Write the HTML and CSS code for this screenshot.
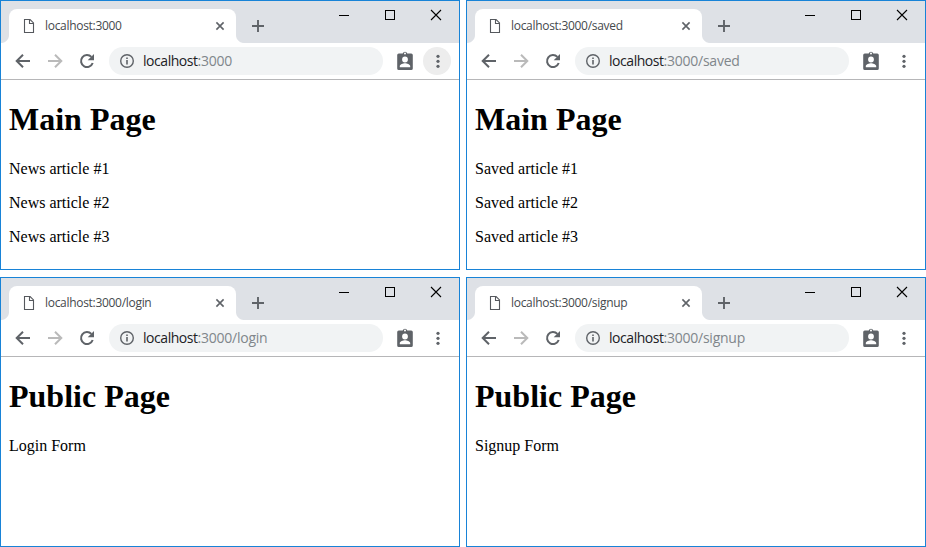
FILE: index.html
```
<!DOCTYPE html>
<html lang="en">
<head>
<meta charset="utf-8">
<title>Pages</title>
<link rel="stylesheet" href="styles.css">
</head>
<body>
<main class="windows" id="windows"></main>

<template id="window-template">
  <section class="window">
    <header class="tabstrip">
      <div class="tab">
        <svg class="tab-icon" width="12" height="16" viewBox="0 0 12 16"><path d="M1.5 1.5h5.6l3.4 3.4v9.6h-9zM6.5 1.5v4h4" fill="none" stroke="#55585d" stroke-width="1.1"/></svg>
        <span class="tab-title"></span>
        <svg class="tab-close" width="10" height="10" viewBox="0 0 10 10"><path d="M1.4 1.4l7.2 7.2M8.6 1.4L1.4 8.6" stroke="#5f6368" stroke-width="1.6"/></svg>
      </div>
      <svg class="new-tab" width="12" height="12" viewBox="0 0 12 12"><path d="M6 0v12M0 6h12" stroke="#5f6368" stroke-width="1.9"/></svg>
      <div class="controls">
        <svg width="12" height="12" viewBox="0 0 12 12" shape-rendering="crispEdges"><path d="M1 6.5h10" stroke="#000"/></svg>
        <svg width="12" height="12" viewBox="0 0 12 12" shape-rendering="crispEdges"><path d="M1.5 1.5h9v9h-9z" fill="none" stroke="#000"/></svg>
        <svg width="12" height="12" viewBox="0 0 12 12"><path d="M1 1l10 10M11 1L1 11" stroke="#000" stroke-width="1.1"/></svg>
      </div>
    </header>
    <nav class="toolbar">
      <span class="button"><svg width="16" height="16" viewBox="0 0 16 16"><path d="M15 8H2.5M8 1.7L1.7 8 8 14.3" fill="none" stroke="#5f6368" stroke-width="2"/></svg></span>
      <span class="button"><svg width="16" height="16" viewBox="0 0 16 16"><path d="M1 8h12.5M8 1.7L14.3 8 8 14.3" fill="none" stroke="#bababa" stroke-width="2"/></svg></span>
      <span class="button"><svg width="16" height="16" viewBox="0 0 16 16"><path d="M13.7 10A6 6 0 1 1 12.4 3.9" fill="none" stroke="#5f6368" stroke-width="2"/><path d="M15 1v6.3H8.7z" fill="#5f6368"/></svg></span>
      <div class="address">
        <svg width="14" height="14" viewBox="0 0 14 14"><circle cx="7" cy="7" r="6.3" fill="none" stroke="#5f6368" stroke-width="1.4"/><path d="M7 3.4v1.5M7 6v4.6" stroke="#5f6368" stroke-width="1.6"/></svg>
        <span class="url"><span class="host">localhost</span><span class="rest"></span></span>
      </div>
      <span class="button"><svg width="16" height="20" viewBox="0 0 16 20"><path fill-rule="evenodd" fill="#5f6368" d="M1.8 2.4h3.9a2.4 2.4 0 0 1 4.6 0h3.9a1.6 1.6 0 0 1 1.6 1.6v13.4a1.6 1.6 0 0 1-1.6 1.6H1.8a1.6 1.6 0 0 1-1.6-1.6V4a1.6 1.6 0 0 1 1.6-1.6zM8 1.6a1 1 0 1 0 0 2 1 1 0 0 0 0-2zM8 5.6a2.9 2.9 0 1 0 0 5.8 2.9 2.9 0 0 0 0-5.8zM2.8 16.3h10.4v-1.2c0-1.9-3.4-2.9-5.2-2.9s-5.2 1-5.2 2.9z"/></svg></span>
      <span class="button menu"><svg width="5" height="14" viewBox="0 0 5 14"><g fill="#5f6368"><circle cx="3" cy="2.3" r="1.6"/><circle cx="3" cy="7.3" r="1.6"/><circle cx="3" cy="12.3" r="1.6"/></g></svg></span>
    </nav>
    <article class="page"><h1></h1></article>
  </section>
</template>
<script src="windows.js"></script>
</body>
</html>
```
FILE: styles.css
```
body {
  margin: 0;
  background: #fff;
}

.windows {
  display: grid;
  grid-template-columns: 460px 460px;
  grid-template-rows: 270px 270px;
  gap: 7px 6px;
}

.window {
  box-sizing: border-box;
  border: 1px solid #1883d7;
  background: #fff;
  overflow: hidden;
}

svg {
  display: block;
  flex: none;
}

.tabstrip {
  display: flex;
  height: 42px;
  background: #dee1e6;
}

.tab {
  position: relative;
  display: flex;
  align-items: center;
  box-sizing: border-box;
  width: 227px;
  height: 34px;
  margin: 8px 0 0 8px;
  padding: 0 11px 0 14px;
  border-radius: 8px 8px 0 0;
  background: #fff;
}

.tab::before,
.tab::after {
  content: "";
  position: absolute;
  bottom: 0;
  width: 8px;
  height: 8px;
}

.tab::before {
  left: -8px;
  background: radial-gradient(circle at 0 0, #dee1e6 7.5px, #fff 8.5px);
}

.tab::after {
  right: -8px;
  background: radial-gradient(circle at 100% 0, #dee1e6 7.5px, #fff 8.5px);
}

.tab-title {
  flex: 1;
  margin-left: 10px;
  font: 12px/16px "Open Sans", "Noto Sans", sans-serif;
  letter-spacing: -0.3px;
  color: #45494d;
  white-space: nowrap;
}

.new-tab {
  margin: 19px 0 0 16px;
}

.controls {
  display: flex;
  gap: 34px;
  margin: 8px 17px 0 auto;
}

.toolbar {
  display: flex;
  align-items: center;
  gap: 4px;
  height: 36px;
  padding: 0 8px;
  border-bottom: 1px solid #b6b6b8;
}

.button {
  display: flex;
  align-items: center;
  justify-content: center;
  width: 28px;
  height: 28px;
  border-radius: 50%;
}

.window:first-child .menu {
  background: #ededed;
}

.address {
  display: flex;
  align-items: center;
  flex: 1;
  gap: 9px;
  height: 28px;
  margin: 0 4px;
  padding-left: 11px;
  border-radius: 14px;
  background: #f1f3f4;
}

.url {
  font: 14px/20px "Open Sans", "Noto Sans", sans-serif;
  letter-spacing: -0.45px;
  white-space: nowrap;
}

.host {
  color: #202124;
}

.rest {
  letter-spacing: -0.25px;
  color: #80868b;
}

.page {
  margin: 0 8px;
  font: 16px/18px "Liberation Serif", serif;
  color: #000;
  display: flow-root;
}

.page h1 {
  margin: 21.44px 0;
  font-size: 32px;
  line-height: 37px;
}

.page p {
  margin: 16px 0;
}
```
FILE: windows.js
```
const pages = [
  { path: "", heading: "Main Page", lines: ["News article #1", "News article #2", "News article #3"] },
  { path: "/saved", heading: "Main Page", lines: ["Saved article #1", "Saved article #2", "Saved article #3"] },
  { path: "/login", heading: "Public Page", lines: ["Login Form"] },
  { path: "/signup", heading: "Public Page", lines: ["Signup Form"] },
];

const template = document.getElementById("window-template");
const container = document.getElementById("windows");

for (const page of pages) {
  const node = template.content.cloneNode(true);
  node.querySelector(".tab-title").textContent = "localhost:3000" + page.path;
  node.querySelector(".rest").textContent = ":3000" + page.path;
  node.querySelector("h1").textContent = page.heading;
  for (const line of page.lines) {
    const p = document.createElement("p");
    p.textContent = line;
    node.querySelector(".page").append(p);
  }
  container.append(node);
}
```
